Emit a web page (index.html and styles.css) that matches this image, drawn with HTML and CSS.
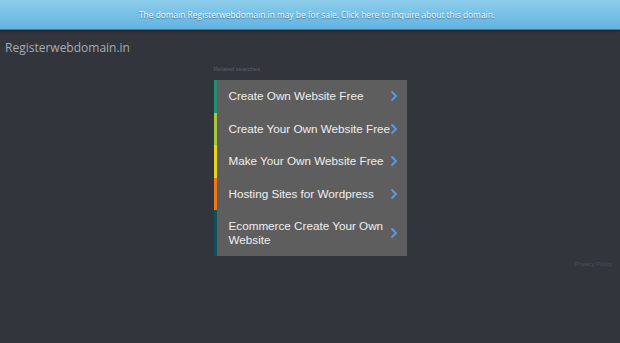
FILE: index.html
```html
<!DOCTYPE html>
<html>
<head>
<meta charset="utf-8">
<link rel="stylesheet" href="styles.css">
</head>
<body>
<div class="topbar">The domain Registerwebdomain.in may be for sale. Click here to inquire about this domain.</div>
<div class="header">Registerwebdomain.in</div>
<div class="main">
  <div class="related">Related searches</div>
  <ul class="list">
    <li class="item c1"><span class="label">Create Own Website Free</span><span class="arrow"><svg width="8" height="12" viewBox="0 0 8 12"><path d="M1.5 1.5 L6 6 L1.5 10.5" fill="none" stroke="#5a9be8" stroke-width="1.8"/></svg></span></li>
    <li class="item c2"><span class="label">Create Your Own Website Free</span><span class="arrow"><svg width="8" height="12" viewBox="0 0 8 12"><path d="M1.5 1.5 L6 6 L1.5 10.5" fill="none" stroke="#5a9be8" stroke-width="1.8"/></svg></span></li>
    <li class="item c3"><span class="label">Make Your Own Website Free</span><span class="arrow"><svg width="8" height="12" viewBox="0 0 8 12"><path d="M1.5 1.5 L6 6 L1.5 10.5" fill="none" stroke="#5a9be8" stroke-width="1.8"/></svg></span></li>
    <li class="item c4"><span class="label">Hosting Sites for Wordpress</span><span class="arrow"><svg width="8" height="12" viewBox="0 0 8 12"><path d="M1.5 1.5 L6 6 L1.5 10.5" fill="none" stroke="#5a9be8" stroke-width="1.8"/></svg></span></li>
    <li class="item c5 multi"><span class="label">Ecommerce Create Your Own Website</span><span class="arrow"><svg width="8" height="12" viewBox="0 0 8 12"><path d="M1.5 1.5 L6 6 L1.5 10.5" fill="none" stroke="#5a9be8" stroke-width="1.8"/></svg></span></li>
  </ul>
</div>
<div class="footer">Privacy Policy</div>
</body>
</html>
```

FILE: styles.css
```css
html, body {
  margin: 0;
  padding: 0;
  background: #33353d;
  height: 100%;
}
.topbar {
  height: 29px;
  line-height: 29px;
  text-align: center;
  font-family: "Open Sans", sans-serif;
  font-size: 8.4px;
  color: #f6fafd;
  text-shadow: 0 1px 1px rgba(0,0,0,0.4);
  background: linear-gradient(#8dcdea, #62b3e3);
  border-bottom: 1px solid #3a7ca8;
  box-shadow: 0 1px 2px rgba(0,0,0,0.4);
  padding-left: 14px;
}
.header {
  font-family: "Open Sans", sans-serif;
  font-size: 12px;
  color: #a9abb1;
  padding: 9px 0 0 5px;
  line-height: 18px;
}
.main {
  width: 193px;
  margin: 8px auto 0;
}
.related {
  font-family: "Liberation Sans", sans-serif;
  font-size: 6px;
  color: #5c5f67;
  line-height: 8px;
  margin-bottom: 7px;
}
.list {
  list-style: none;
  margin: 0;
  padding: 0;
  background: #5e5e5e;
}
.item {
  display: flex;
  align-items: center;
  border-left: 3px solid #1f8f72;
  padding: 9px 9px 9px 12px;
  font-family: "Liberation Sans", sans-serif;
  font-size: 11.7px;
  line-height: 14.5px;
  color: #efefef;
}
.label { flex: 1; white-space: nowrap; }
.multi { padding-top: 9px; padding-bottom: 9px; line-height: 14px; }
.multi .label { white-space: normal; padding-right: 4px; }
.arrow { display: flex; width: 8px; flex: none; }
.c1 { border-left-color: #1f8f72; }
.c2 { border-left-color: #a3c83c; }
.c3 { border-left-color: #e6d41e; }
.c4 { border-left-color: #ee7914; }
.c5 { border-left-color: #124e5d; }
.footer {
  text-align: right;
  padding: 5px 8px 0 0;
  font-family: "Liberation Sans", sans-serif;
  font-size: 6px;
  color: #4b4e57;
}
```
